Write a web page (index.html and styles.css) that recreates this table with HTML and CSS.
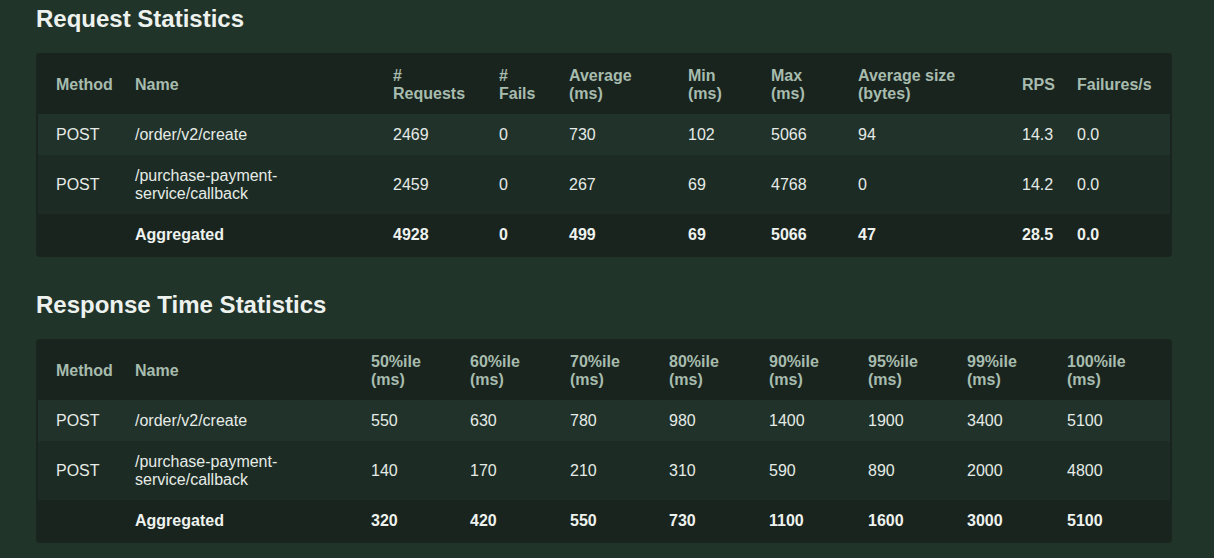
FILE: index.html
```html
<!DOCTYPE html>
<html lang="en">
<head>
<meta charset="utf-8">
<title>Locust Report</title>
<link rel="stylesheet" href="styles.css">
</head>
<body>
<main class="report">
  <section class="section section-first">
    <h2 class="section-title">Request Statistics</h2>
    <table class="stats">
      <colgroup>
        <col class="c-method"><col class="c-name-req"><col class="c-requests"><col class="c-fails"><col class="c-avg"><col class="c-min"><col class="c-max"><col class="c-size"><col class="c-rps"><col>
      </colgroup>
      <thead>
        <tr>
          <th>Method</th><th>Name</th><th>#<br>Requests</th><th>#<br>Fails</th><th>Average<br>(ms)</th><th>Min<br>(ms)</th><th>Max<br>(ms)</th><th>Average size<br>(bytes)</th><th>RPS</th><th>Failures/s</th>
        </tr>
      </thead>
      <tbody>
        <tr>
          <td>POST</td><td>/order/v2/create</td><td>2469</td><td>0</td><td>730</td><td>102</td><td>5066</td><td>94</td><td>14.3</td><td>0.0</td>
        </tr>
        <tr>
          <td>POST</td><td>/purchase-payment-<br>service/callback</td><td>2459</td><td>0</td><td>267</td><td>69</td><td>4768</td><td>0</td><td>14.2</td><td>0.0</td>
        </tr>
      </tbody>
      <tfoot>
        <tr>
          <td></td><td>Aggregated</td><td>4928</td><td>0</td><td>499</td><td>69</td><td>5066</td><td>47</td><td>28.5</td><td>0.0</td>
        </tr>
      </tfoot>
    </table>
  </section>

  <section class="section">
    <h2 class="section-title">Response Time Statistics</h2>
    <table class="stats">
      <colgroup>
        <col class="c-method"><col class="c-name-resp"><col class="c-p99"><col class="c-p100"><col class="c-p99"><col class="c-p100"><col class="c-p99"><col class="c-p99"><col class="c-p100"><col>
      </colgroup>
      <thead>
        <tr>
          <th>Method</th><th>Name</th><th>50%ile<br>(ms)</th><th>60%ile<br>(ms)</th><th>70%ile<br>(ms)</th><th>80%ile<br>(ms)</th><th>90%ile<br>(ms)</th><th>95%ile<br>(ms)</th><th>99%ile<br>(ms)</th><th>100%ile<br>(ms)</th>
        </tr>
      </thead>
      <tbody>
        <tr>
          <td>POST</td><td>/order/v2/create</td><td>550</td><td>630</td><td>780</td><td>980</td><td>1400</td><td>1900</td><td>3400</td><td>5100</td>
        </tr>
        <tr>
          <td>POST</td><td>/purchase-payment-<br>service/callback</td><td>140</td><td>170</td><td>210</td><td>310</td><td>590</td><td>890</td><td>2000</td><td>4800</td>
        </tr>
      </tbody>
      <tfoot>
        <tr>
          <td></td><td>Aggregated</td><td>320</td><td>420</td><td>550</td><td>730</td><td>1100</td><td>1600</td><td>3000</td><td>5100</td>
        </tr>
      </tfoot>
    </table>
  </section>
</main>
</body>
</html>
```
FILE: styles.css
```css
html, body {
  margin: 0;
  padding: 0;
}

body {
  background: #21342a;
  color: #e9eee9;
  font-family: "Liberation Sans", Arial, Helvetica, sans-serif;
  font-size: 16px;
  line-height: 18px;
  height: 558px;
  overflow: hidden;
}

.report {
  display: flex;
  flex-direction: column;
  gap: 34px;
  padding: 5px 42px 0 36px;
}

.section {
  display: flex;
  flex-direction: column;
  gap: 20px;
}

.section-title {
  margin: 0;
  font-size: 24px;
  line-height: 28px;
  font-weight: 700;
  color: #eef2ee;
}

.stats {
  width: 1136px;
  table-layout: fixed;
  border-collapse: separate;
  border-spacing: 0;
  border: 2px solid #19241e;
  border-radius: 4px;
  background: #19241e;
}

.stats th,
.stats td {
  padding: 11.5px 4px 11.5px 18px;
  text-align: left;
  vertical-align: middle;
  white-space: nowrap;
}

.stats th {
  font-weight: 700;
  color: #a7bcae;
}

.stats tbody tr:nth-child(odd) {
  background: #20322a;
}

.stats tbody tr:nth-child(even) {
  background: #1c2c24;
}

.stats td {
  color: #e6ebe7;
}

.stats tfoot td {
  font-weight: 700;
  color: #eef2ee;
}

.c-method { width: 79px; }
.c-name-req { width: 258px; }
.c-requests { width: 106px; }
.c-fails { width: 70px; }
.c-avg { width: 119px; }
.c-min { width: 83px; }
.c-max { width: 87px; }
.c-size { width: 164px; }
.c-rps { width: 55px; }

.c-name-resp { width: 236px; }
.c-p99 { width: 99px; }
.c-p100 { width: 100px; }
```
